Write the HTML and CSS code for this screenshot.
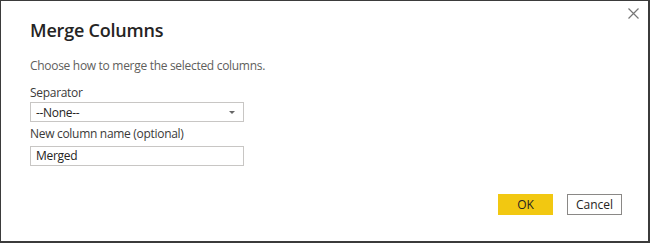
FILE: index.html
```html
<!DOCTYPE html>
<html>
<head>
  <title>Merge Columns</title>
  <link rel="stylesheet" href="styles.css">
</head>
<body>
  <div class="dialog">
    <button class="close-btn" title="Close">
      <svg width="11" height="11" viewBox="0 0 11 11">
        <path d="M0.5 0.5 L10.5 10.5 M10.5 0.5 L0.5 10.5" stroke="#777" stroke-width="1.2" fill="none"/>
      </svg>
    </button>
    <h1>Merge Columns</h1>
    <p class="intro">Choose how to merge the selected columns.</p>
    <div class="form-group">
      <label for="separator">Separator</label>
      <div class="select-box" id="separator">
        <span>--None--</span>
        <span class="arrow"></span>
      </div>
    </div>
    <div class="form-group">
      <label for="colname">New column name (optional)</label>
      <input type="text" id="colname" value="Merged">
    </div>
    <div class="footer">
      <button class="btn btn-primary">OK</button>
      <button class="btn">Cancel</button>
    </div>
  </div>
</body>
</html>
```

FILE: styles.css
```css
html, body {
  margin: 0;
  padding: 0;
  background-color: white;
}
body {
  font-family: "Open Sans", "Noto Sans", Arial, sans-serif;
  color: #252423;
}
.dialog {
  position: relative;
  box-sizing: border-box;
  width: 650px;
  height: 243px;
  border-style: solid;
  border-color: #3b3b3b;
  border-width: 1px 2px 2px 1px;
  padding: 0 26px 26px 29px;
  display: flex;
  flex-direction: column;
}
.close-btn {
  position: absolute;
  top: 6px;
  right: 8px;
  width: 13px;
  height: 13px;
  padding: 0;
  border: none;
  background: none;
  display: flex;
  align-items: center;
  justify-content: center;
}
h1 {
  font-size: 18px;
  font-weight: 600;
  line-height: 24px;
  margin: 17px 0 0 0;
  color: #252423;
  letter-spacing: -0.2px;
}
.intro {
  font-size: 12px;
  line-height: 16px;
  margin: 16px 0 0 0;
  color: #605e5c;
  letter-spacing: -0.3px;
}
.form-group {
  width: 214px;
}
.form-group:first-of-type {
  margin-top: 11px;
}
label {
  display: block;
  font-size: 12px;
  line-height: 16px;
  margin-bottom: 1px;
  color: #3b3a39;
  letter-spacing: -0.3px;
}
.select-box, input {
  box-sizing: border-box;
  width: 214px;
  height: 20px;
  border: 1px solid #c8c6c4;
  font-family: inherit;
  font-size: 12px;
  letter-spacing: -0.3px;
  color: #252423;
  padding: 0 5px;
  margin: 0;
}
.select-box {
  display: flex;
  align-items: center;
  justify-content: space-between;
  margin-bottom: 4px;
}
.arrow {
  width: 0;
  height: 0;
  border-left: 3px solid transparent;
  border-right: 3px solid transparent;
  border-top: 3px solid #666;
  margin-right: 3px;
}
input {
  outline: none;
}
.footer {
  margin-top: auto;
  display: flex;
  justify-content: flex-end;
  gap: 14px;
}
.btn {
  box-sizing: border-box;
  width: 55px;
  height: 21px;
  font-family: inherit;
  font-size: 12px;
  color: #252423;
  background-color: white;
  border: 1px solid #8a8886;
  padding: 0;
}
.btn-primary {
  background-color: #f2c811;
  border-color: #f2c811;
}
```
